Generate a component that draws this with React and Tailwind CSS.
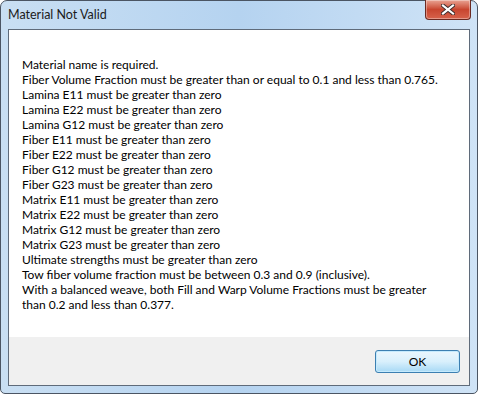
const messages = [
  'Material name is required.',
  'Fiber Volume Fraction must be greater than or equal to 0.1 and less than 0.765.',
  'Lamina E11 must be greater than zero',
  'Lamina E22 must be greater than zero',
  'Lamina G12 must be greater than zero',
  'Fiber E11 must be greater than zero',
  'Fiber E22 must be greater than zero',
  'Fiber G12 must be greater than zero',
  'Fiber G23 must be greater than zero',
  'Matrix E11 must be greater than zero',
  'Matrix E22 must be greater than zero',
  'Matrix G12 must be greater than zero',
  'Matrix G23 must be greater than zero',
  'Ultimate strengths must be greater than zero',
  'Tow fiber volume fraction must be between 0.3 and 0.9 (inclusive).',
  'With a balanced weave, both Fill and Warp Volume Fractions must be greater',
  'than 0.2 and less than 0.377.',
];

function CloseButton() {
  return (
    <button className="absolute right-[7px] top-0 w-[46px] h-[20px] rounded-b-[4px] border border-t-0 border-[#6b2a22] bg-gradient-to-b from-[#e8a393] via-[#c8452f] to-[#d7624b] flex items-center justify-center shadow-[inset_0_0_0_1px_rgba(255,255,255,0.35)]">
      <svg width="14" height="11" viewBox="0 0 14 11">
        <path d="M2 1.5 L12 9.5 M12 1.5 L2 9.5" stroke="#3b2b2b" strokeWidth="4" strokeLinecap="square" />
        <path d="M2 1.5 L12 9.5 M12 1.5 L2 9.5" stroke="#ffffff" strokeWidth="2.2" strokeLinecap="square" />
      </svg>
    </button>
  );
}

export default function App() {
  return (
    <div className="w-[478px] h-[394px] relative font-['Lato','Liberation_Sans',sans-serif] text-[12px] text-black">
      <div className="w-full h-full rounded-t-[7px] rounded-b-[5px] border border-[#4b5563] bg-gradient-to-r from-[#c9dff3] via-[#b5d3f0] to-[#cfe3f6] flex flex-col px-[7px] pb-[7px]">
        {/* Title bar */}
        <div className="h-[28px] flex items-center text-[#1b1b1b] text-[12.5px]">
          Material Not Valid
        </div>
        <CloseButton />
        {/* Client area */}
        <div className="flex-1 border border-[#5f6b7a] bg-white flex flex-col">
          <div className="h-[307px] bg-white pl-[13px] pt-[27px] leading-[15px] whitespace-nowrap">
            {messages.map((m) => (
              <div key={m}>{m}</div>
            ))}
          </div>
          <div className="flex-1 bg-[#f0f0f0] flex justify-end items-start pt-[13px] pr-[9px]">
            <button className="w-[85px] h-[23px] rounded-[3px] border border-[#3c7fb1] bg-gradient-to-b from-[#eaf6fd] via-[#d9f0fc] to-[#a7d9f5] shadow-[inset_0_0_0_1px_#c5eafd] text-[12px] text-black">
              OK
            </button>
          </div>
        </div>
      </div>
    </div>
  );
}
